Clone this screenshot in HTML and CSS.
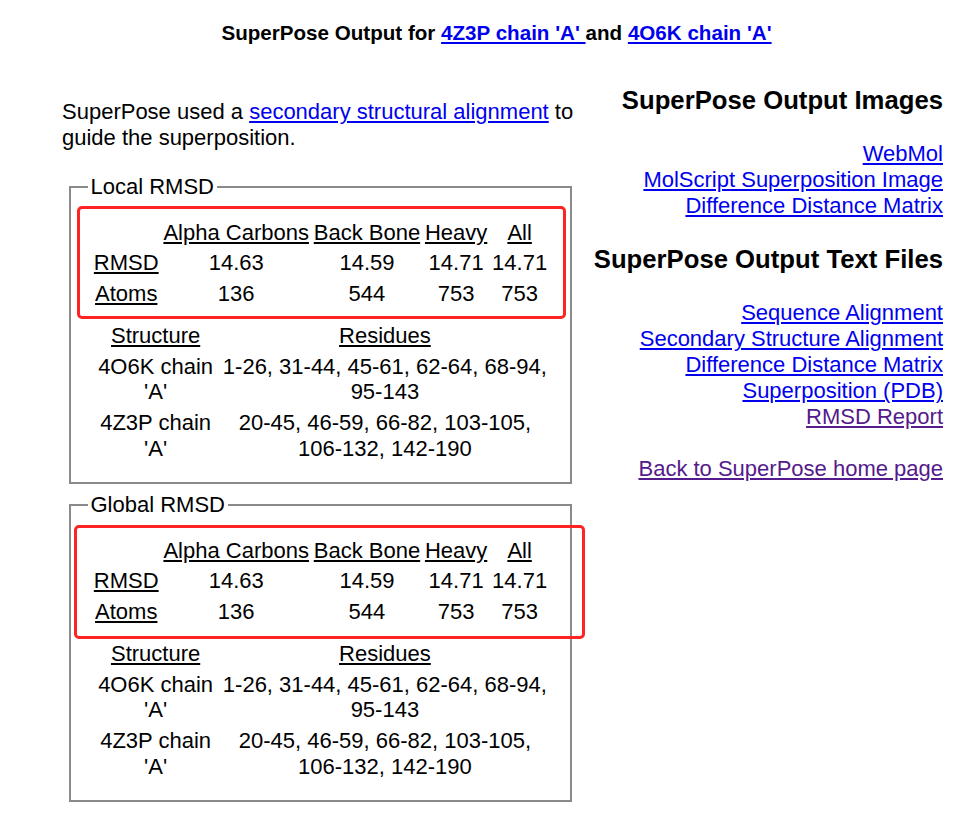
FILE: index.html
```html
<!DOCTYPE html>
<html lang="en">
<head>
<meta charset="utf-8">
<title>SuperPose Output</title>
<link rel="stylesheet" href="styles.css">
</head>
<body>
<div class="title">SuperPose Output for <a href="#">4Z3P chain 'A' </a>and <a href="#">4O6K chain 'A'</a></div>
<div class="main">
  <div class="left">
    <p class="intro">SuperPose used a <a href="#">secondary structural alignment</a> to guide the superposition.</p>

    <fieldset class="box">
      <legend>Local RMSD</legend>
      <div class="wrap">
        <div class="hl hl-local"></div>
        <table class="stats">
          <tr><td></td><td><u>Alpha Carbons</u></td><td><u>Back Bone</u></td><td><u>Heavy</u></td><td><u>All</u></td></tr>
          <tr><td><u>RMSD</u></td><td>14.63</td><td>14.59</td><td>14.71</td><td>14.71</td></tr>
          <tr><td><u>Atoms</u></td><td>136</td><td>544</td><td>753</td><td>753</td></tr>
        </table>
        <table class="res">
          <tr><td class="c1"><u>Structure</u></td><td class="c2"><u>Residues</u></td></tr>
          <tr><td class="c1">4O6K chain 'A'</td><td class="c2">1-26, 31-44, 45-61, 62-64, 68-94, 95-143</td></tr>
          <tr><td class="c1">4Z3P chain 'A'</td><td class="c2">20-45, 46-59, 66-82, 103-105, 106-132, 142-190</td></tr>
        </table>
      </div>
    </fieldset>

    <fieldset class="box">
      <legend>Global RMSD</legend>
      <div class="wrap">
        <div class="hl hl-global"></div>
        <table class="stats">
          <tr><td></td><td><u>Alpha Carbons</u></td><td><u>Back Bone</u></td><td><u>Heavy</u></td><td><u>All</u></td></tr>
          <tr><td><u>RMSD</u></td><td>14.63</td><td>14.59</td><td>14.71</td><td>14.71</td></tr>
          <tr><td><u>Atoms</u></td><td>136</td><td>544</td><td>753</td><td>753</td></tr>
        </table>
        <table class="res">
          <tr><td class="c1"><u>Structure</u></td><td class="c2"><u>Residues</u></td></tr>
          <tr><td class="c1">4O6K chain 'A'</td><td class="c2">1-26, 31-44, 45-61, 62-64, 68-94, 95-143</td></tr>
          <tr><td class="c1">4Z3P chain 'A'</td><td class="c2">20-45, 46-59, 66-82, 103-105, 106-132, 142-190</td></tr>
        </table>
      </div>
    </fieldset>
  </div>

  <div class="right">
    <h3>SuperPose Output Images</h3>
    <div class="links">
      <a href="#">WebMol</a><br>
      <a href="#">MolScript Superposition Image</a><br>
      <a href="#">Difference Distance Matrix</a>
    </div>
    <h3>SuperPose Output Text Files</h3>
    <div class="links">
      <a href="#">Sequence Alignment</a><br>
      <a href="#">Secondary Structure Alignment</a><br>
      <a href="#">Difference Distance Matrix</a><br>
      <a href="#">Superposition (PDB)</a><br>
      <a href="#" class="visited">RMSD Report</a><br>
      <br>
      <a href="#" class="visited">Back to SuperPose home page</a>
    </div>
  </div>
</div>
</body>
</html>
```

FILE: styles.css
```css
html, body {
  margin: 0;
  padding: 0;
  background: #ffffff;
}

body {
  font-family: "Liberation Sans", Arial, sans-serif;
  font-size: 22px;
  line-height: 26px;
  color: #000000;
}

a {
  color: #0000ee;
}

a.visited {
  color: #551a8b;
}

.title {
  font-weight: bold;
  font-size: 20.6px;
  line-height: 24px;
  text-align: center;
  padding: 21px 0 0 17px;
}

.main {
  display: flex;
  margin-top: 40px;
}

.left {
  flex: none;
  width: 513px;
  padding-left: 62px;
}

.intro {
  margin: 14px 0 0;
}

.box {
  margin: 23px 3px 0 7px;
  padding: 16px 16.5px 17.2px;
  border: 2px solid #8a8a8a;
}

.box + .box {
  margin-top: 8px;
}

.box legend {
  padding: 0 3px;
  line-height: 26px;
}

.wrap {
  position: relative;
}

.hl {
  position: absolute;
  box-sizing: border-box;
  border: 3px solid #ff2424;
  border-radius: 5px;
  pointer-events: none;
}

.hl-local {
  left: -10.5px;
  top: -10px;
  width: 489px;
  height: 113px;
}

.hl-global {
  left: -14px;
  top: -9px;
  width: 511px;
  height: 114px;
}

table {
  border-collapse: separate;
  border-spacing: 2px;
  margin: 0 auto;
}

td {
  padding: 1.5px 1.4px;
  text-align: center;
  vertical-align: middle;
  line-height: 25.7px;
}

.res {
  margin-top: 9.2px;
}

.res .c1 {
  width: 124px;
}

.res .c2 {
  width: 325px;
}

.right {
  flex: 1;
  text-align: right;
  padding-right: 33px;
}

.right h3 {
  font-size: 25.7px;
  line-height: 30px;
  margin: 25.7px 0;
}

.right h3:first-child {
  margin-top: 0;
}
```
